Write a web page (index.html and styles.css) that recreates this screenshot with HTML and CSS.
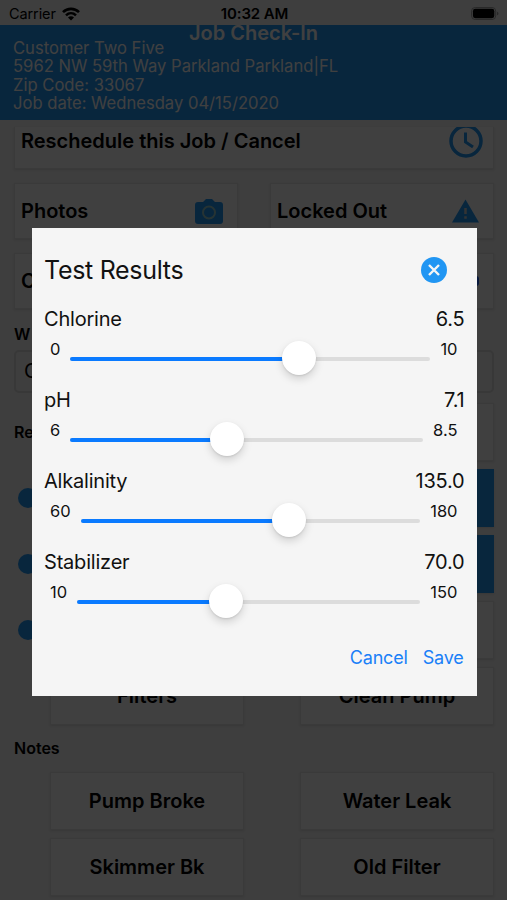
FILE: index.html
```html
<!DOCTYPE html>
<html lang="en">
<head>
    <meta charset="UTF-8">
    <meta name="viewport" content="width=device-width, initial-scale=1.0">
    <title>Job Check-In</title>
    <link rel="stylesheet" href="styles.css">
</head>
<body>
    <div class="status-bar">
        <div class="carrier">
            <span>Carrier</span>
            <svg class="wifi" viewBox="0 0 18 14">
                <path d="M1 5.2C5.5 .7 12.500 .7 17 5.200" fill="none" stroke="#000" stroke-width="2.600"/>
                <path d="M4 8.300c2.900-2.800 7.100-2.800 10 0" fill="none" stroke="#000" stroke-width="2.500"/>
                <path d="M9 13.500 6 10.500c1.700-1.600 4.300-1.600 6 0z"/>
            </svg>
        </div>
        <span class="time">10:32 AM</span>
        <svg class="battery" viewBox="0 0 30 14">
            <rect x=".5" y=".5" width="26" height="13" rx="4" fill="none" stroke="#999"/>
            <rect x="2" y="2" width="23" height="10" rx="2.500"/>
            <path d="M28 5v4c2-.6 2-3.400 0-4z" fill="#999"/>
        </svg>
    </div>

    <header>
        <h1>Job Check-In</h1>
        <p>Customer Two Five</p>
        <p>5962 NW 59th Way Parkland Parkland|FL</p>
        <p>Zip Code: 33067</p>
        <p>Job date: Wednesday 04/15/2020</p>
    </header>

    <main>
        <div class="card reschedule">
            <span>Reschedule this Job / Cancel</span>
            <svg class="clock" viewBox="0 0 34 34">
                <circle cx="17" cy="17" r="15" fill="none" stroke="#2196f3" stroke-width="3.500"/>
                <path d="M16.500 8.500V18l7.500 5" fill="none" stroke="#2196f3" stroke-width="3"/>
            </svg>
        </div>
        <div class="card-row">
            <div class="card">
                <span>Photos</span>
                <svg class="camera" viewBox="0 0 28 25">
                    <path d="M3 3h5l3-3h6l3 3h5a3 3 0 0 1 3 3v16a3 3 0 0 1-3 3H3a3 3 0 0 1-3-3V6a3 3 0 0 1 3-3z" fill="#2196f3"/>
                    <circle cx="14" cy="13.500" r="6" fill="none" stroke="#9cc" stroke-width="2"/>
                </svg>
            </div>
            <div class="card">
                <span>Locked Out</span>
                <svg class="warning" viewBox="0 0 28 24">
                    <path d="M14 0 28 24H0z" fill="#2196f3"/>
                    <path d="M12.700 9h2.600v6h-2.600zM12.700 17.500h2.600V20h-2.600z" fill="#ccc"/>
                </svg>
            </div>
        </div>
        <div class="card-row">
            <div class="card"><span>C</span></div>
            <div class="card"><span></span><i class="badge-dot"></i></div>
        </div>

        <h2 class="work-title">W</h2>
        <div class="select">C</div>

        <div class="readings">
            <h2>Re</h2>
            <div class="option"></div>
            <i class="dot"></i>
            <div class="option active"></div>
            <i class="dot"></i>
            <div class="option active"></div>
            <i class="dot"></i>
            <div class="option"></div>
        </div>

        <div class="option-grid">
            <div class="option">Filters</div>
            <div class="option">Clean Pump</div>
        </div>
        <h2 class="notes-title">Notes</h2>
        <div class="option-grid">
            <div class="option">Pump Broke</div>
            <div class="option">Water Leak</div>
            <div class="option">Skimmer Bk</div>
            <div class="option">Old Filter</div>
        </div>
    </main>

    <div class="overlay">
        <div class="modal">
            <div class="modal-header">
                <h3>Test Results</h3>
                <svg class="close" viewBox="0 0 26 26">
                    <circle cx="13" cy="13" r="13" fill="#2196f3"/>
                    <path d="M8 8l10 10M18 8 8 18" stroke="#f5f5f5" stroke-width="2.400"/>
                </svg>
            </div>

            <div class="test">
                <div class="test-name"><span>Chlorine</span><span>6.5</span></div>
                <div class="slider">
                    <span>0</span>
                    <div class="track"><div class="fill" style="width: 63.500%"><i class="thumb"></i></div></div>
                    <span>10</span>
                </div>
            </div>
            <div class="test">
                <div class="test-name"><span>pH</span><span>7.1</span></div>
                <div class="slider">
                    <span>6</span>
                    <div class="track"><div class="fill" style="width: 44.500%"><i class="thumb"></i></div></div>
                    <span>8.5</span>
                </div>
            </div>
            <div class="test">
                <div class="test-name"><span>Alkalinity</span><span>135.0</span></div>
                <div class="slider">
                    <span>60</span>
                    <div class="track"><div class="fill" style="width: 61.300%"><i class="thumb"></i></div></div>
                    <span>180</span>
                </div>
            </div>
            <div class="test">
                <div class="test-name"><span>Stabilizer</span><span>70.0</span></div>
                <div class="slider">
                    <span>10</span>
                    <div class="track"><div class="fill" style="width: 43.500%"><i class="thumb"></i></div></div>
                    <span>150</span>
                </div>
            </div>

            <div class="actions">
                <a>Cancel</a>
                <a>Save</a>
            </div>
        </div>
    </div>
</body>
</html>
```
FILE: styles.css
```css
* {
    box-sizing: border-box;
}

body {
    margin: 0;
    height: 900px;
    overflow: hidden;
    font-family: Inter, "Liberation Sans", sans-serif;
    background: #f5f5f5;
    color: #000;
}

h1, h2, h3, p {
    margin: 0;
}

svg {
    display: block;
    flex: none;
}

.status-bar {
    height: 25px;
    padding: 2px 7px 0 9px;
    display: grid;
    grid-template-columns: 1fr auto 1fr;
    align-items: center;
    font-size: 14.5px;
    letter-spacing: -0.1px;
}

.carrier {
    display: flex;
    align-items: center;
    gap: 6px;
}

.wifi {
    width: 18px;
    height: 14px;
}

.time {
    font-weight: 600;
    font-size: 15px;
}

.battery {
    width: 30px;
    height: 13px;
    justify-self: end;
}

header {
    height: 95px;
    padding: 0 13px;
    background: #2196f3;
    color: #fff;
}

header h1 {
    height: 14px;
    line-height: 17px;
    text-align: center;
    font-size: 20px;
    font-weight: 600;
}

header p {
    font-size: 16.6px;
    line-height: 18.4px;
}

main {
    padding: 7px 13px 0 14px;
}

.card {
    height: 56px;
    padding: 0 14px 0 6px;
    display: flex;
    align-items: center;
    justify-content: space-between;
    background: #fff;
    border: 1px solid #e6e6e6;
    box-shadow: 0 1px 2px rgba(0, 0, 0, 0.1);
    font-size: 20px;
    font-weight: 600;
    line-height: 24px;
}

.reschedule {
    height: 42px;
    padding: 2px 10px 0 6px;
    align-items: flex-start;
    border-top: none;
    overflow: hidden;
}

.clock {
    width: 34px;
    height: 34px;
    margin-top: -5px;
}

.camera {
    width: 28px;
    height: 25px;
}

.warning {
    width: 27px;
    height: 24px;
}

.card-row {
    display: grid;
    grid-template-columns: 1fr 1fr;
    gap: 32px;
    margin-top: 14px;
}

h2 {
    font-size: 16px;
    font-weight: 600;
    line-height: 20px;
}

.badge-dot {
    width: 10px;
    height: 10px;
    border-radius: 3px;
    background: #2164f3;
}

.work-title {
    margin-top: 15px;
}

.select {
    height: 43px;
    margin-top: 6px;
    padding-left: 8px;
    border: 2px solid #ddd;
    border-radius: 5px;
    line-height: 38px;
    font-size: 20px;
}

.readings {
    display: grid;
    grid-template-columns: 1fr 194px;
    gap: 8px 0;
    align-items: center;
    margin: 10px 0 8px;
}

.dot {
    width: 20px;
    height: 20px;
    margin-left: 4px;
    border-radius: 50%;
    background: #2196f3;
}

.option {
    height: 58px;
    display: flex;
    align-items: center;
    justify-content: center;
    background: #fff;
    border: 1px solid #e6e6e6;
    box-shadow: 0 1px 2px rgba(0, 0, 0, 0.1);
    font-size: 20px;
    font-weight: 600;
}

.active {
    background: #2196f3;
    border-color: #2196f3;
}

.option-grid {
    display: grid;
    grid-template-columns: 194px 194px;
    justify-content: space-between;
    gap: 8px;
    padding-left: 36px;
}

.notes-title {
    margin: 13px 0 14px;
}

.overlay {
    position: absolute;
    inset: 0;
    padding: 228px 30.5px 0 31.5px;
    background: rgba(0, 0, 0, 0.75);
}

.modal {
    height: 468px;
    padding: 24px 12px 0 12.5px;
    background: #f5f5f5;
    color: #111;
}

.modal-header {
    display: flex;
    align-items: center;
    justify-content: space-between;
    height: 35px;
    padding-right: 18px;
}

.modal-header h3 {
    font-size: 25px;
    font-weight: 400;
    letter-spacing: -0.3px;
}

.close {
    width: 26px;
    height: 26px;
}

.test {
    height: 81px;
    padding-top: 20px;
}

.test-name {
    display: flex;
    justify-content: space-between;
    font-size: 20px;
    line-height: 24px;
    letter-spacing: -0.2px;
}

.slider {
    display: flex;
    gap: 10px;
    padding: 6px 7px 0 6px;
    font-size: 16.5px;
    line-height: 24px;
}

.track {
    flex: 1;
    height: 4px;
    margin-top: 20px;
    border-radius: 2px;
    background: #dcdcdc;
}

.fill {
    position: relative;
    height: 4px;
    border-radius: 2px;
    background: #0a7aff;
}

.thumb {
    position: absolute;
    top: -16px;
    right: -17px;
    width: 34px;
    height: 34px;
    border-radius: 50%;
    background: #fff;
    box-shadow: 0 4px 9px rgba(0, 0, 0, 0.15), 0 1px 2px rgba(0, 0, 0, 0.1);
}

.actions {
    display: flex;
    justify-content: flex-end;
    gap: 15px;
    margin-top: 35px;
    padding-right: 1px;
    color: #1a80f8;
    font-size: 18px;
    line-height: 24px;
    letter-spacing: -0.2px;
}
```
